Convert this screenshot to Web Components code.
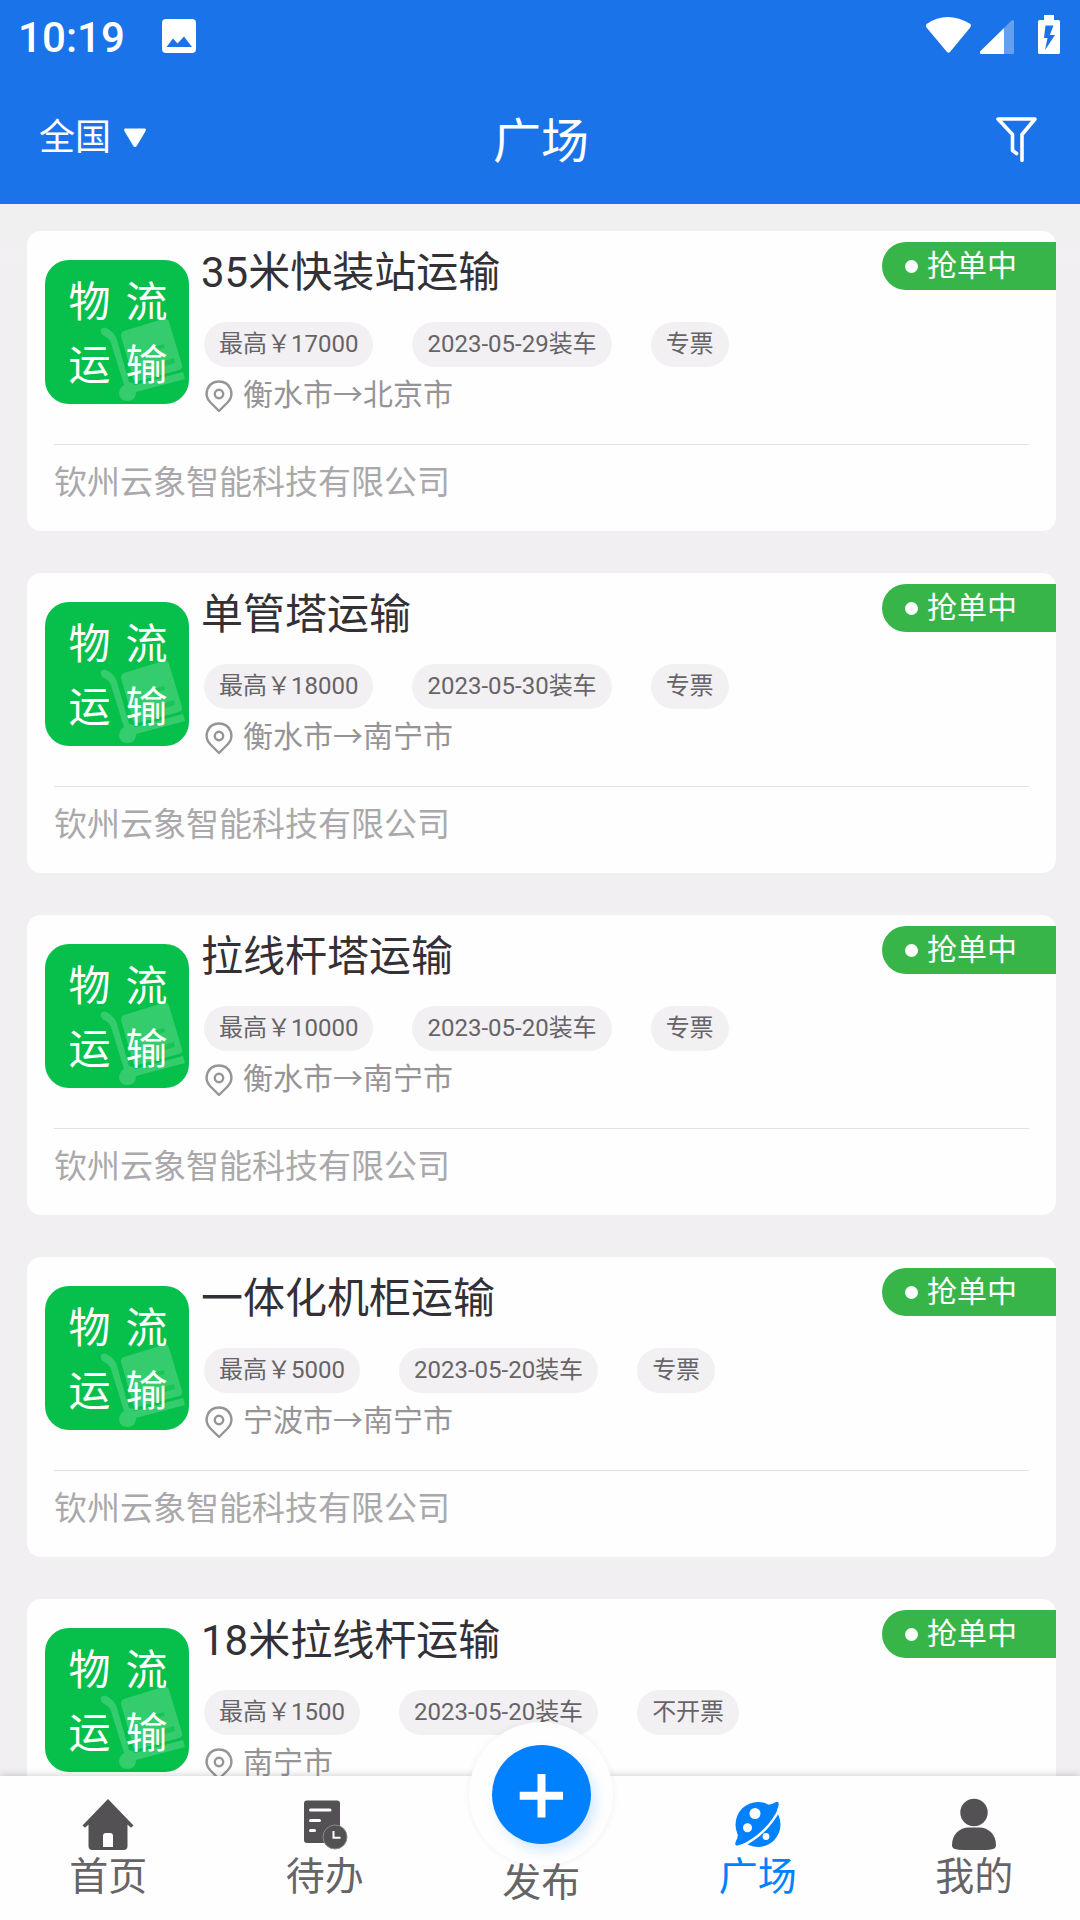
<!DOCTYPE html>
<html lang="zh-CN">
<head>
<meta charset="utf-8">
<title>广场</title>
<style>
html,body{margin:0;padding:0}
body{width:1080px;height:1920px;overflow:hidden;font-family:Roboto,"Noto Sans CJK SC",sans-serif;background:#f1eff2}
</style>
</head>
<body>
<freight-app></freight-app>
<script>
const define=(name,html,after)=>customElements.define(name,class extends HTMLElement{
  connectedCallback(){
    if(this.shadowRoot)return;
    const t=document.createElement('template');
    t.innerHTML=html;
    this.attachShadow({mode:'open'}).append(t.content.cloneNode(true));
    if(after)after(this,this.shadowRoot);
  }
});

define('status-bar',`
<style>
:host{display:flex;height:72px;color:#fff;align-items:flex-start;padding:0 20px 0 18px;box-sizing:border-box}
.time{font:500 42px/48px Roboto,sans-serif;margin-top:14px;width:144px;letter-spacing:.1px}
.pic{margin-top:19px}
.right{margin-left:auto;display:block}
</style>
<div class="time">10:19</div>
<svg class="pic" width="34" height="34" viewBox="0 0 34 34"><rect width="34" height="34" rx="4" fill="#fff"/><path d="M4.5 28 11 19.500 15.500 24.500 22 17.500 30 28Z" fill="#1a73e9"/></svg>
<svg class="right" width="136" height="60" viewBox="924 0 136 60">
<path d="M926.500 24Q947 10 970.500 24Q971.500 25.500 970.200 27.500L950 52Q948.500 53.500 947 52L926.500 27.500Q925.300 25.500 926.500 24Z" fill="#fff"/>
<path d="M1004 28V54H981Q979.500 54 980 51.500Z" fill="#fff"/><path d="M1004 28 1011.500 20.500Q1014 19.500 1014 21.500V52.500Q1014 54 1012.500 54H1004Z" fill="#fff" opacity=".32"/>
<path d="M1044 15H1054V20H1058.500Q1060 20 1060 21.500V52.500Q1060 54 1058.500 54H1039.500Q1038 54 1038 52.500V21.500Q1038 20 1039.500 20H1044Z" fill="#fff"/>
<path d="M1045.500 25.500H1053.500L1049.800 35H1055L1045 50 1047.500 38H1044Z" fill="#1a73e9"/>
</svg>`);

define('title-bar',`
<style>
:host{display:grid;grid-template-columns:1fr auto 1fr;height:132px;color:#fff;padding:0 41px 0 39px;box-sizing:border-box}
.area{display:flex;align-items:flex-start;font-size:36px;line-height:48px;padding-top:42px}
.area svg{margin:14px 0 0 12px}
h1{margin:46px 0 0;font-weight:400;font-size:48px;line-height:48px;padding-left:4px}
.filter{justify-self:end;margin:43px 0 0;}
</style>
<div class="area"><span>全国</span><svg width="24" height="20" viewBox="0 0 24 20"><path d="M2.500.5H21.500Q23.500.5 22.600 3L14 17.500Q12 20.500 10 17.500L1.400 3Q.5.5 2.500.5Z" fill="#fff"/></svg></div>
<h1><slot></slot></h1>
<svg class="filter" width="46" height="50" viewBox="993 115 46 50" fill="none" stroke="#fff" stroke-width="3.600" stroke-linecap="round" stroke-linejoin="round"><path d="M1016.600 153.500 1012.500 150.500V134.500L998 119H1035L1022 134.500V160.500"/></svg>`);

define('freight-logo',`
<style>
:host{display:grid;grid-template-columns:42px 42px;column-gap:15px;justify-content:center;align-content:center;width:144px;height:144px;border-radius:24px;background:#06c04b;color:#fff;font-size:42px;line-height:62.500px;position:relative;overflow:hidden;flex:none;box-sizing:border-box;padding:5px 0 0 2px}
svg{position:absolute;left:0;top:0}
span{position:relative}
</style>
<svg width="144" height="144" viewBox="0 0 144 144"><g fill="#fff" opacity=".19">
<path d="M79 71 118 59Q123 58 124 62L137 105Q138 109 134 110L93 121Q89 122 88 118L76 76Q76 72 79 71Z"/>
<path d="M56 69Q59 66 63 69Q70 73 72 80L84 122Q88 122 90 125L138 112 140 119 91 132Q91 141 82 141Q74 140 74 133Q75 127 79 125L66 83Q64 78 59 76Q55 74 56 69Z"/></g>
<path d="M103 88 119 84 120 88 104 92ZM119 101 129 98 130 103 120 106Z" fill="#06c04b" opacity=".6"/></svg>
<span>物</span><span>流</span><span>运</span><span>输</span>`);

define('info-chip',`
<style>:host{display:block;height:45px;line-height:45px;padding:0 15px;border-radius:23px;background:#f2f0f3;color:#666467;font-size:24px;white-space:nowrap}
</style><slot></slot>`);

define('grab-badge',`
<style>:host{display:flex;align-items:center;box-sizing:border-box;width:174px;height:48px;border-radius:24px 0 0 24px;background:#38b549;color:#fff;font-size:30px;line-height:44px;padding-left:23px}
i{width:13px;height:13px;border-radius:50%;background:#fff;margin-right:9px}span{margin-top:-1px}</style><i></i><span>抢单中</span>`);

define('freight-card',`
<style>
:host{display:block;position:relative;width:1029px;height:300px;border-radius:14px;background:#fefefe;flex:none;box-sizing:border-box;padding:29px 27px 0 18px}
.top{display:flex;height:184px;box-sizing:border-box}
.body{padding-left:12px}
h2{font-weight:400;font-size:42px;line-height:50px;color:#333135;margin:-12px 0 0;height:74px;white-space:nowrap}
.chips{display:flex;gap:39px;margin-left:3px}
.route{display:flex;color:#969497;font-size:30px;line-height:40px;margin-top:8px;padding-left:4px}
.route svg{margin:5px 10px 0 0}
.company{border-top:1.500px solid #e3e1e4;margin-left:9px;color:#aaa8ab;font-size:33px;line-height:44px;padding-top:16px}
grab-badge{position:absolute;right:0;top:11px}
</style>
<div class="top"><freight-logo></freight-logo><div class="body"><h2></h2><div class="chips"></div>
<div class="route"><svg width="28" height="33" viewBox="0 0 28 33" fill="none" stroke="#969497" stroke-width="2.400"><path d="M14 31 5.500 22.500C-2.500 14 3 1.500 14 1.500S30.500 14 22.500 22.500Z" stroke-linejoin="round"/><circle cx="14" cy="14" r="4.200"/></svg><span></span></div></div></div>
<div class="company"></div><grab-badge></grab-badge>`,(el,root)=>{
  root.querySelector('h2').textContent=el.getAttribute('name');
  root.querySelector('.route span').textContent=el.getAttribute('route');
  root.querySelector('.company').textContent=el.getAttribute('company')||'';
  for(const v of el.getAttribute('tags').split('|')){
    const c=document.createElement('info-chip');c.textContent=v;root.querySelector('.chips').append(c);
  }
});

define('nav-item',`
<style>:host{display:flex;flex-direction:column;align-items:center;flex:0 0 216.500px;color:#666467;font-size:39px;line-height:44px;padding-top:20px}
::slotted(svg){display:block;margin-bottom:5px}</style><slot name="icon"></slot><div><slot></slot></div>`);

define('publish-button',`
<style>
:host{flex:0 0 216.500px;display:flex;justify-content:center;position:relative;color:#666467;font-size:39px;line-height:44px}
.label{margin-top:85px;position:relative;z-index:2}
.ring{position:absolute;left:36px;top:-54px;width:144px;height:144px;border-radius:50%;background:#fefefe;box-shadow:0 0 6px rgba(60,50,70,.07)}
.dot{position:absolute;left:59px;top:-31px;width:99px;height:99px;border-radius:50%;background:#0281ff;box-shadow:5px 7px 12px rgba(2,129,255,.16);display:grid;place-items:center}
</style>
<div class="ring"></div><div class="dot"><svg width="99" height="99" viewBox="0 0 99 99"><path d="M49.500 29V72.500M27.700 50.800H71" stroke="#fff" stroke-width="8" fill="none"/></svg></div>
<div class="label"><slot></slot></div>`);

define('tab-bar',`
<style>:host{display:flex;height:144px;flex:none;background:#fefefe;position:relative;z-index:1;box-shadow:0 -1px 7px rgba(40,30,50,.2)}
.on{color:#0281ff}</style>
<nav-item><svg slot="icon" width="52" height="54" viewBox="0 0 52 54"><path d="M26 3 51.500 29.500 49 31.800 45.500 28.500V50Q45.500 54 41.500 54H10.500Q6.500 54 6.500 50V28.500L3 31.800.5 29.500Z" fill="#545154"/><path d="M21 51V40Q21 37 24 37H28Q31 37 31 40V51Z" fill="#fefefe"/></svg>首页</nav-item>
<nav-item><svg slot="icon" width="46" height="54" viewBox="0 0 46 54"><rect x="2" y="4.500" width="36" height="42.500" rx="3" fill="#545154"/><path d="M8.500 14H28M8.500 24.500H17.500M8.500 34.500H12.500" stroke="#fefefe" stroke-width="3" stroke-linecap="round"/><circle cx="33" cy="41" r="12" fill="#545154" stroke="#8c898c" stroke-width="1"/><path d="M31.500 35V41.800H38.500" fill="none" stroke="#fefefe" stroke-width="2"/></svg>待办</nav-item>
<publish-button>发布</publish-button>
<nav-item class="on"><svg slot="icon" width="46" height="54" viewBox="0 0 46 54"><circle cx="23" cy="28.500" r="22.500" fill="#0281ff"/><path d="M32 9Q37 9 41 6Q44.500 5 43.500 9.500Q42 16 39 21L29 20ZM2 36Q4 40 1 45Q-1.500 51 4 49Q9 48 13 45V35Z" fill="#0281ff"/><path d="M45.500 11Q33 38 5 51" fill="none" stroke="#fefefe" stroke-width="2.500"/><circle cx="20" cy="17.500" r="5.500" fill="#fefefe"/><circle cx="12.500" cy="31.700" r="4.500" fill="#fefefe"/><circle cx="31" cy="40.500" r="3.400" fill="#fefefe"/></svg>广场</nav-item>
<nav-item><svg slot="icon" width="46" height="54" viewBox="0 0 46 54"><circle cx="23" cy="16.500" r="13.700" fill="#545154"/><path d="M18 31.500H28C38 31.500 45 39 45 49Q45 52 42 53Q39 54 34 54H12Q7 54 4 53Q1 52 1 49C1 39 8 31.500 18 31.500Z" fill="#545154"/></svg>我的</nav-item>`);

define('freight-app',`
<style>
:host{display:flex;flex-direction:column;width:1080px;height:1920px;overflow:hidden}
header{background:#1a73e9;flex:none}
main{flex:1;min-height:0;overflow:hidden;display:flex;flex-direction:column;gap:42px;padding:27px 24px 0 27px;background:linear-gradient(#f1f0ef,#f1eff2 60px)}
</style>
<header><status-bar></status-bar><title-bar>广场</title-bar></header>
<main>
<freight-card name="35米快装站运输" tags="最高￥17000|2023-05-29装车|专票" route="衡水市→北京市" company="钦州云象智能科技有限公司"></freight-card>
<freight-card name="单管塔运输" tags="最高￥18000|2023-05-30装车|专票" route="衡水市→南宁市" company="钦州云象智能科技有限公司"></freight-card>
<freight-card name="拉线杆塔运输" tags="最高￥10000|2023-05-20装车|专票" route="衡水市→南宁市" company="钦州云象智能科技有限公司"></freight-card>
<freight-card name="一体化机柜运输" tags="最高￥5000|2023-05-20装车|专票" route="宁波市→南宁市" company="钦州云象智能科技有限公司"></freight-card>
<freight-card name="18米拉线杆运输" tags="最高￥1500|2023-05-20装车|不开票" route="南宁市"></freight-card>
</main>
<tab-bar></tab-bar>`);
</script>
</body>
</html>
